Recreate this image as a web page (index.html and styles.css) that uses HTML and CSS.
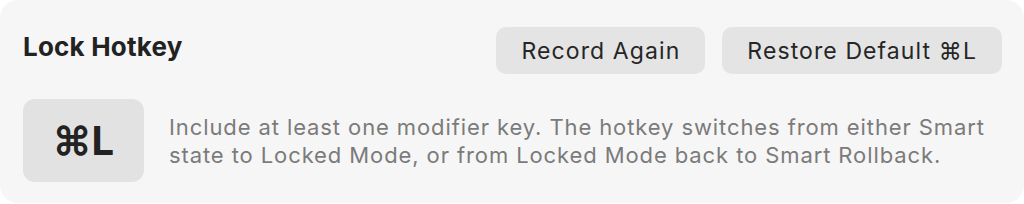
FILE: index.html
```html
<!DOCTYPE html>
<html lang="en">
<head>
<meta charset="UTF-8">
<meta name="viewport" content="width=device-width, initial-scale=1.0">
<title>Lock Hotkey</title>
<link rel="stylesheet" href="styles.css">
</head>
<body>
    <div class="card">
        <div class="header">
            <div class="title">Lock Hotkey</div>
            <div class="actions">
                <button class="button">Record Again</button>
                <button class="button">Restore Default ⌘L</button>
            </div>
        </div>
        <div class="content">
            <div class="keycap">⌘L</div>
            <p class="hint">Include at least one modifier key. The hotkey switches from either Smart state to Locked Mode, or from Locked Mode back to Smart Rollback.</p>
        </div>
    </div>
</body>
</html>
```

FILE: styles.css
```css
body {
    margin: 0;
    background-color: #fff;
    font-family: Inter, "Noto Sans", sans-serif;
}
.card {
    width: 1024px;
    height: 203px;
    box-sizing: border-box;
    padding: 27px 22px 0 23px;
    border-radius: 18px;
    background-color: #f6f6f6;
}
.header {
    display: flex;
    justify-content: space-between;
    align-items: flex-start;
}
.title {
    margin-top: 5px;
    font-size: 26px;
    line-height: 30px;
    font-weight: 700;
    letter-spacing: 0.2px;
    color: #222;
}
.actions {
    display: flex;
    gap: 17px;
}
.button {
    height: 47px;
    padding: 0 25px;
    font-family: inherit;
    font-size: 23px;
    letter-spacing: 1.1px;
    color: #262626;
    border: none;
    border-radius: 10px;
    background-color: #e4e4e4;
}
.content {
    display: flex;
    align-items: center;
    gap: 25px;
    margin-top: 25px;
}
.keycap {
    flex: none;
    width: 121px;
    height: 83px;
    display: flex;
    align-items: center;
    justify-content: center;
    border-radius: 12px;
    background-color: #e2e2e2;
    font-size: 40px;
    font-weight: 700;
    color: #222;
}
.hint {
    margin: 0;
    font-size: 22px;
    line-height: 28px;
    letter-spacing: 0.9px;
    color: #7b7b7b;
}
```
